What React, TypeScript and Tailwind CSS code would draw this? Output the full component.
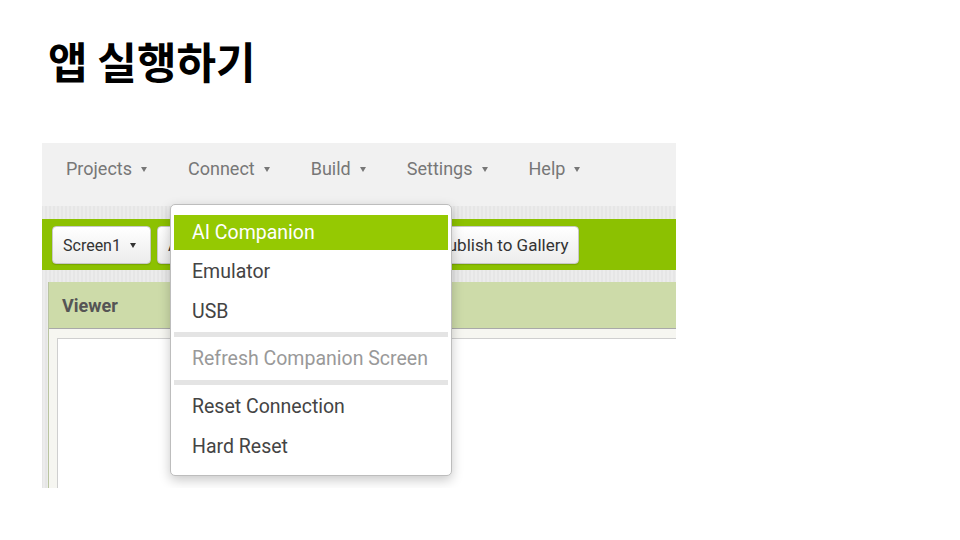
import React from "react";

const Caret = ({ color = "#777" }: { color?: string }) => (
  <span
    className="inline-block w-0 h-0 border-x-[3.5px] border-t-[5px] border-x-transparent"
    style={{ borderTopColor: color }}
  />
);

const NavItem = ({ label }: { label: string }) => (
  <div className="flex items-center gap-[9px] text-[18px] leading-[24px] text-[#777]">
    <span>{label}</span>
    <Caret />
  </div>
);

const ToolButton = ({ children, w }: { children: React.ReactNode; w: string }) => (
  <div
    className={`h-[38px] ${w} flex items-center px-[10px] pt-[2px] rounded-[4px] border border-[#c8c8c8] bg-gradient-to-b from-white to-[#ececec] shadow-[0_1px_1px_rgba(0,0,0,0.15)] text-[16px] text-[#333] whitespace-nowrap overflow-hidden`}
  >
    {children}
  </div>
);

const texture =
  "bg-[#e9e9e9] bg-[repeating-linear-gradient(90deg,#e3e3e3_0px,#efefef_2px,#e3e3e3_4px)]";

export default function App() {
  return (
    <div
      className="w-[960px] h-[540px] bg-white relative overflow-hidden"
      style={{ fontFamily: "Roboto, 'Noto Sans', 'Liberation Sans', sans-serif" }}
    >
      <div
        className="pl-[48px] pt-[32px] h-[143px] text-[43px] font-bold leading-[56px] text-black"
        style={{ fontFamily: "'Noto Sans CJK KR', 'Noto Sans', sans-serif" }}
      >
        앱 실행하기
      </div>

      <div className="ml-[42px] w-[634px] h-[345px] relative overflow-hidden bg-white">
        {/* nav bar */}
        <div className="h-[63px] bg-[#f1f1f1] flex items-start gap-[41px] pl-[24px] pt-[14px]">
          <NavItem label="Projects" />
          <NavItem label="Connect" />
          <NavItem label="Build" />
          <NavItem label="Settings" />
          <NavItem label="Help" />
        </div>
        <div className={`h-[13px] ${texture}`} />
        {/* green toolbar */}
        <div className="h-[51px] bg-[#8cc101] flex items-center gap-[6px] pl-[10px]">
          <ToolButton w="w-[99px]">
            <span className="flex items-center gap-[9px]">
              Screen1 <Caret color="#333" />
            </span>
          </ToolButton>
          <ToolButton w="w-[122px]">Add Screen ...</ToolButton>
          <ToolButton w="w-[135px]">Remove Screen</ToolButton>
          <ToolButton w="w-[153px]">
            <span className="text-[17px]">Publish to Gallery</span>
          </ToolButton>
        </div>
        <div className={`h-[12px] ${texture}`} />
        {/* viewer panel */}
        <div className="flex h-[207px]">
          <div className={`w-[6px] ${texture}`} />
          <div className="flex-1 flex flex-col border-l border-[#b9c4a0]">
            <div className="h-[47px] bg-[#cddba9] border-b border-[#a9a9a9] flex items-center pl-[13px] text-[18px] font-bold text-[#555]">
              Viewer
            </div>
            <div className="flex-1 bg-[#f6f6f1] pl-[8px] pt-[9px] flex">
              <div className="flex-1 bg-white border-t border-l border-[#cfcfcf]" />
            </div>
          </div>
        </div>

        {/* dropdown menu */}
        <div className="absolute left-[128px] top-[61px] w-[282px] h-[272px] bg-white border border-[#bdbdbd] rounded-[5px] shadow-[0_4px_12px_rgba(0,0,0,0.22)] pt-[10px] px-[3px] text-[19.5px]">
          <div className="h-[35px] pt-[1px] bg-[#95c902] text-white flex items-center pl-[18px]">AI Companion</div>
          <div className="h-[41px] pt-[2px] text-[#444] flex items-center pl-[18px]">Emulator</div>
          <div className="h-[40px] pt-[2px] text-[#444] flex items-center pl-[18px]">USB</div>
          <div className="h-[5px] mt-[1px] bg-[#e4e4e4]" />
          <div className="h-[43px] pt-[1px] text-[#999] flex items-center pl-[18px]">Refresh Companion Screen</div>
          <div className="h-[5px] bg-[#e4e4e4]" />
          <div className="h-[42px] pt-[2px] text-[#444] flex items-center pl-[18px]">Reset Connection</div>
          <div className="h-[39px] pt-[1px] text-[#444] flex items-center pl-[18px]">Hard Reset</div>
        </div>
      </div>
    </div>
  );
}
